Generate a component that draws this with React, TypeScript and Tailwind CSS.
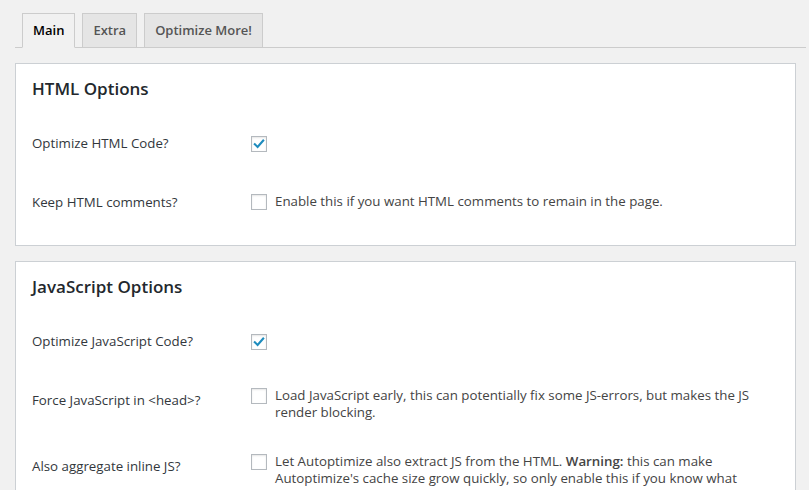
import React from "react";

const font = { fontFamily: '"Open Sans", "Noto Sans", sans-serif' };

type Row = {
  label: string;
  checked: boolean;
  desc?: React.ReactNode;
  tall?: boolean;
};

const htmlRows: Row[] = [
  { label: "Optimize HTML Code?", checked: true },
  {
    label: "Keep HTML comments?",
    checked: false,
    desc: "Enable this if you want HTML comments to remain in the page.",
  },
];

const jsRows: Row[] = [
  { label: "Optimize JavaScript Code?", checked: true },
  {
    label: "Force JavaScript in <head>?",
    checked: false,
    tall: true,
    desc: "Load JavaScript early, this can potentially fix some JS-errors, but makes the JS render blocking.",
  },
  {
    label: "Also aggregate inline JS?",
    checked: false,
    tall: true,
    desc: (
      <>
        Let Autoptimize also extract JS from the HTML. <b className="font-semibold">Warning:</b> this can make
        Autoptimize's cache size grow quickly, so only enable this if you know what you are doing.
      </>
    ),
  },
];

function Checkbox({ checked }: { checked: boolean }) {
  return (
    <span className="flex h-4 w-4 shrink-0 items-center justify-center border border-[#b4b9be] bg-white shadow-[inset_0_1px_2px_rgba(0,0,0,0.1)]">
      {checked && (
        <svg width="14" height="14" viewBox="0 0 16 16">
          <polyline
            points="3.2,8.2 6.4,11.4 12.8,4"
            fill="none"
            stroke="#1e8cbe"
            strokeWidth="2.4"
            strokeLinecap="square"
          />
        </svg>
      )}
    </span>
  );
}

function OptionRow({ row }: { row: Row }) {
  if (!row.desc) {
    return (
      <div className="flex h-[58px] items-center">
        <div className="w-[219px] shrink-0 text-[13.3px] text-[#32373c]">{row.label}</div>
        <Checkbox checked={row.checked} />
      </div>
    );
  }
  return (
    <div className={`flex ${row.tall ? "min-h-[66px] items-start" : "h-[58px] items-center"}`}>
      <div
        className={`w-[219px] shrink-0 text-[13.3px] leading-[18px] text-[#32373c] ${row.tall ? "pt-[20px]" : ""}`}
      >
        {row.label}
      </div>
      <div className={`flex gap-[8px] pr-[26px] ${row.tall ? "items-start pt-[17px] pb-[15px]" : "items-center"}`}>
        <Checkbox checked={row.checked} />
        <span className="mt-[-1px] text-[13.3px] leading-[17px] text-[#444]">{row.desc}</span>
      </div>
    </div>
  );
}

function Panel({ title, rows }: { title: string; rows: Row[] }) {
  return (
    <div className="mr-[10px] border border-[#ccd0d4] bg-white px-[16px] pt-[13px] pb-[14px]">
      <h2 className="mb-[14px] h-6 text-[17px] font-semibold leading-6 text-[#23282d]">{title}</h2>
      {rows.map((r) => (
        <OptionRow key={r.label} row={r} />
      ))}
    </div>
  );
}

export default function App() {
  const tabs = ["Main", "Extra", "Optimize More!"];
  return (
    <div className="min-h-screen bg-[#f1f1f1] pt-[13px]" style={font}>
      <div className="ml-[15px] mr-[3px]">
        <div className="flex gap-[7px] border-b border-[#ccc] pl-[7px]">
          {tabs.map((t, i) => (
            <div
              key={t}
              className={`-mb-px flex h-[35px] items-center border border-[#ccc] px-[10px] text-[13px] font-semibold ${
                i === 0 ? "border-b-[#f1f1f1] bg-[#f1f1f1] text-[#000]" : "bg-[#e5e5e5] text-[#555]"
              }`}
            >
              {t}
            </div>
          ))}
        </div>
        <div className="mt-[15px] flex flex-col gap-[15px]">
          <Panel title="HTML Options" rows={htmlRows} />
          <Panel title="JavaScript Options" rows={jsRows} />
        </div>
      </div>
    </div>
  );
}
